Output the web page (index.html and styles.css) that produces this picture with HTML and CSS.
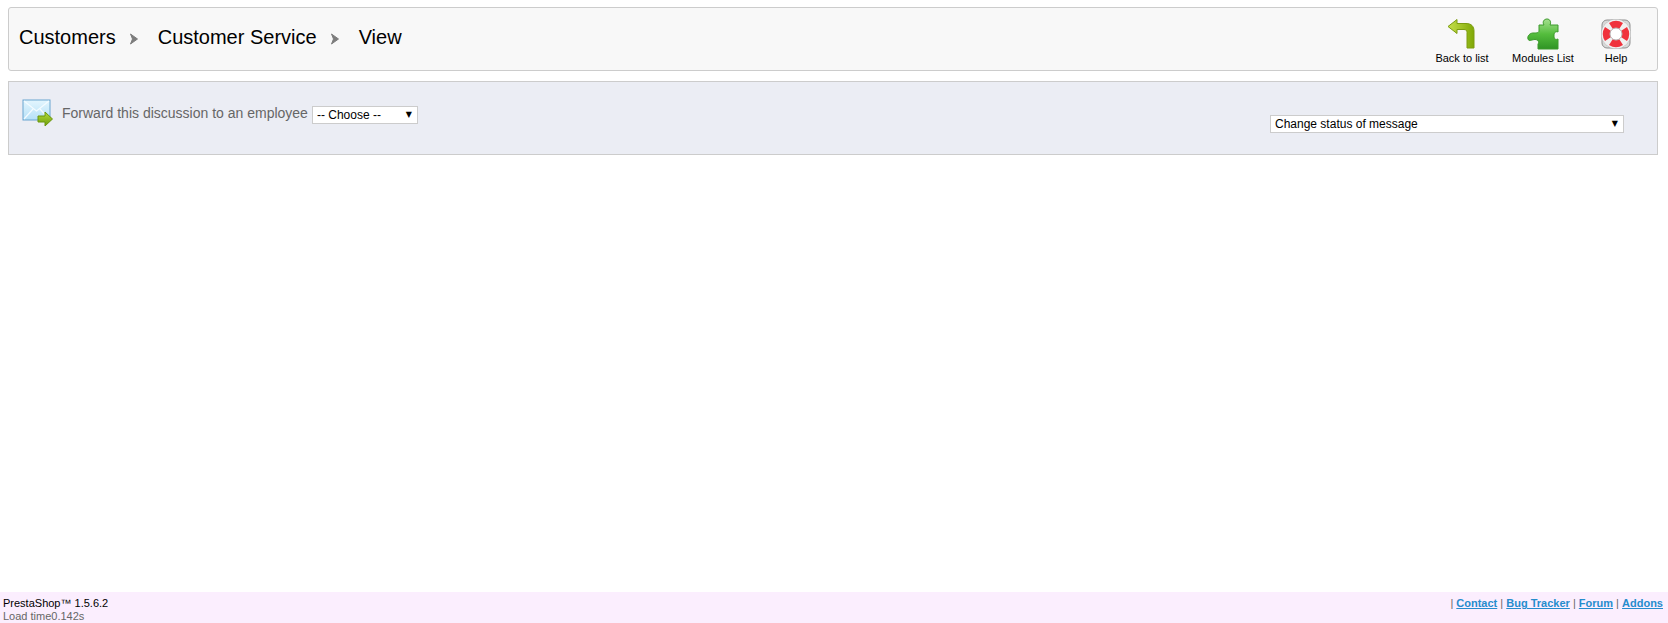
FILE: index.html
```html
<!DOCTYPE html>
<html lang="en">
<head>
    <meta charset="UTF-8">
    <title>Customer Service - View</title>
    <link rel="stylesheet" href="styles.css">
</head>
<body>
    <div class="page">
        <div class="toolbar">
            <h1 class="breadcrumb">
                <span>Customers</span>
                <svg class="crumb-sep" width="10" height="12" viewBox="0 0 10 12"><path d="M1.5 1 L8.5 6 L1.5 11 L3.5 6 Z" fill="#7d7d7d" stroke="#7d7d7d" stroke-width="1" stroke-linejoin="round"/></svg>
                <span>Customer Service</span>
                <svg class="crumb-sep" width="10" height="12" viewBox="0 0 10 12"><path d="M1.5 1 L8.5 6 L1.5 11 L3.5 6 Z" fill="#7d7d7d" stroke="#7d7d7d" stroke-width="1" stroke-linejoin="round"/></svg>
                <span>View</span>
            </h1>
            <ul class="actions">
                <li class="action action-back">
                    <svg width="32" height="32" viewBox="0 0 32 32">
                        <defs>
                            <linearGradient id="backGrad" x1="0" y1="0" x2="1" y2="0">
                                <stop offset="0" stop-color="#c6e04a"/>
                                <stop offset="1" stop-color="#7fa806"/>
                            </linearGradient>
                        </defs>
                        <path d="M2 8.5 L11 1.5 L11 5.5 L20 5.5 C25.5 5.5 28 8.5 28 13 L28 30 L21 30 L21 14.5 C21 12.5 20 11.5 18 11.5 L11 11.5 L11 15.5 Z" fill="url(#backGrad)" stroke="#7c9c10" stroke-width="1" stroke-linejoin="round"/>
                    </svg>
                    <span>Back to list</span>
                </li>
                <li class="action action-modules">
                    <svg width="32" height="32" viewBox="0 0 32 32">
                        <defs>
                            <linearGradient id="pieceGrad" x1="0" y1="0" x2="0" y2="1">
                                <stop offset="0" stop-color="#a5e08f"/>
                                <stop offset="0.5" stop-color="#55bd3d"/>
                                <stop offset="1" stop-color="#2f9424"/>
                            </linearGradient>
                        </defs>
                        <path d="M12 7 L17 7 C15 4 17 1 20 1 C23 1 24.500 4 23 7 L31 7 L31 14 C29 13 27 14.500 27 17 L27 19 C27 21 29 22 31 21 L31 31 L11 31 L11 26 C12.500 24 11 21.500 8 21.500 C5 21.500 2 24 1 21 C0 18 3 15 6 15 C9 15 12 15 12 13 Z" fill="url(#pieceGrad)" stroke="#3d9a2c" stroke-width="1" stroke-linejoin="round"/>
                    </svg>
                    <span>Modules List</span>
                </li>
                <li class="action action-help">
                    <svg width="32" height="32" viewBox="0 0 32 32">
                        <rect x="2" y="2" width="28" height="28" rx="5" fill="#d8d8d8" stroke="#8f8f8f"/>
                        <circle cx="16" cy="16" r="14.5" fill="#f5f5f5" stroke="#a8a8a8"/>
                        <circle cx="16" cy="16" r="10.500" fill="none" stroke="#f0f0f0" stroke-width="8"/>
                        <path d="M7.700 7.700 A11.700 11.700 0 0 0 7.700 24.300 L12.500 19.500 A5 5 0 0 1 12.500 12.500 Z M24.300 7.700 A11.700 11.700 0 0 1 24.300 24.300 L19.500 19.500 A5 5 0 0 0 19.500 12.500 Z" fill="none"/>
                        <path d="M5 9 A13 13 0 0 0 5 23 L11.500 18.800 A5.500 5.500 0 0 1 11.500 13.200 Z M27 9 A13 13 0 0 1 27 23 L20.500 18.800 A5.500 5.500 0 0 0 20.500 13.200 Z M9 5 A13 13 0 0 1 23 5 L18.800 11.500 A5.500 5.500 0 0 0 13.200 11.500 Z M9 27 A13 13 0 0 0 23 27 L18.800 20.500 A5.500 5.500 0 0 1 13.200 20.500 Z" fill="#f0323c"/>
                        <circle cx="16" cy="16" r="6" fill="#fff" stroke="#b5b5b5"/>
                    </svg>
                    <span>Help</span>
                </li>
            </ul>
        </div>

        <div class="panel">
            <div class="forward">
                <svg class="mail-icon" width="32" height="30" viewBox="0 0 32 30">
                    <defs>
                        <linearGradient id="mailGrad" x1="0" y1="0" x2="0" y2="1">
                            <stop offset="0" stop-color="#e4f6fe"/>
                            <stop offset="1" stop-color="#b5e0f7"/>
                        </linearGradient>
                        <linearGradient id="arrowGrad" x1="0" y1="0" x2="0" y2="1">
                            <stop offset="0" stop-color="#b4dc3c"/>
                            <stop offset="1" stop-color="#6d9d0a"/>
                        </linearGradient>
                    </defs>
                    <rect x="1" y="1" width="27" height="20" fill="url(#mailGrad)" stroke="#6aa6cf"/>
                    <path d="M2 2 L14.500 12 L27 2 M2 20 L11 10 M27 20 L18 10" fill="none" stroke="#f4fbff" stroke-width="1.200"/>
                    <path d="M16 17 L23 17 L23 13 L30.500 20 L23 27 L23 23 L16 23 Z" fill="url(#arrowGrad)" stroke="#6a960c" stroke-linejoin="round"/>
                </svg>
                <label class="forward-label">Forward this discussion to an employee</label>
                <div class="select-box select-employee">
                    <select><option>-- Choose --</option></select>
                </div>
            </div>
            <div class="select-box select-status">
                <select><option>Change status of message</option></select>
            </div>
        </div>

        <div class="footer">
            <div class="footer-info">
                <div class="version">PrestaShop™ 1.5.6.2</div>
                <div class="load-time">Load time0.142s</div>
            </div>
            <div class="footer-links">
                | <a href="#">Contact</a> | <a href="#">Bug Tracker</a> | <a href="#">Forum</a> | <a href="#">Addons</a>
            </div>
        </div>
    </div>
</body>
</html>
```

FILE: styles.css
```css
html, body {
    margin: 0;
    padding: 0;
    background: #fff;
}
body {
    font-family: "Liberation Sans", Arial, sans-serif;
    font-size: 12px;
    color: #000;
}
.page {
    display: flex;
    flex-direction: column;
    height: 623px;
    padding-top: 7px;
    box-sizing: border-box;
}
.toolbar {
    display: flex;
    justify-content: space-between;
    align-items: flex-start;
    height: 64px;
    box-sizing: border-box;
    margin: 0 10px 0 8px;
    background: #f8f8f8;
    border: 1px solid #ccc;
    border-radius: 3px;
}
.breadcrumb {
    display: flex;
    align-items: center;
    gap: 13px;
    margin: 18px 0 0 10px;
    font-size: 20px;
    line-height: 23px;
    font-weight: normal;
}
.crumb-sep {
    margin: 3px 6px 0 0;
}
.actions {
    display: flex;
    list-style: none;
    margin: 10px 10px 0 0;
    padding: 0;
}
.action {
    display: flex;
    flex-direction: column;
    align-items: center;
    font-size: 11px;
    line-height: 13px;
}
.action svg {
    margin-bottom: 2px;
}
.action span {
    color: #000;
}
.action-back {
    width: 70px;
}
.action-modules {
    width: 76px;
    margin-left: 8px;
}
.action-help {
    width: 62px;
    margin-left: 4px;
}
.panel {
    display: flex;
    justify-content: space-between;
    height: 74px;
    box-sizing: border-box;
    margin: 10px 10px 0 8px;
    background: #ebedf4;
    border: 1px solid #ccc;
}
.forward {
    display: flex;
    align-items: center;
    height: 30px;
    margin: 17px 0 0 13px;
}
.mail-icon {
    margin-right: 8px;
}
.forward-label {
    font-size: 14px;
    color: #666;
    margin-right: 4px;
    position: relative;
    top: -1px;
}
.select-box {
    position: relative;
    height: 18px;
}
.select-box::after {
    content: "▼";
    position: absolute;
    right: 6px;
    top: 0;
    font-family: "DejaVu Sans", sans-serif;
    font-size: 8px;
    line-height: 18px;
    pointer-events: none;
}
.select-box select {
    display: block;
    appearance: none;
    width: 100%;
    height: 18px;
    box-sizing: border-box;
    margin: 0;
    padding: 0 0 0 4px;
    background: #fff;
    border: 1px solid #ccc;
    border-radius: 0;
    font-family: "Liberation Sans", Arial, sans-serif;
    font-size: 12px;
    color: #000;
}
.select-employee {
    width: 106px;
    margin-top: 1px;
}
.select-status {
    width: 354px;
    margin: 33px 33px 0 0;
}
.footer {
    display: flex;
    justify-content: space-between;
    margin-top: auto;
    height: 31px;
    box-sizing: border-box;
    padding: 5px 5px 0 3px;
    background: #fbeefe;
    font-size: 11px;
    line-height: 13px;
}
.load-time {
    color: #666;
}
.footer-links {
    color: #666;
}
.footer-links a {
    color: #268ccd;
    font-weight: bold;
}
```
